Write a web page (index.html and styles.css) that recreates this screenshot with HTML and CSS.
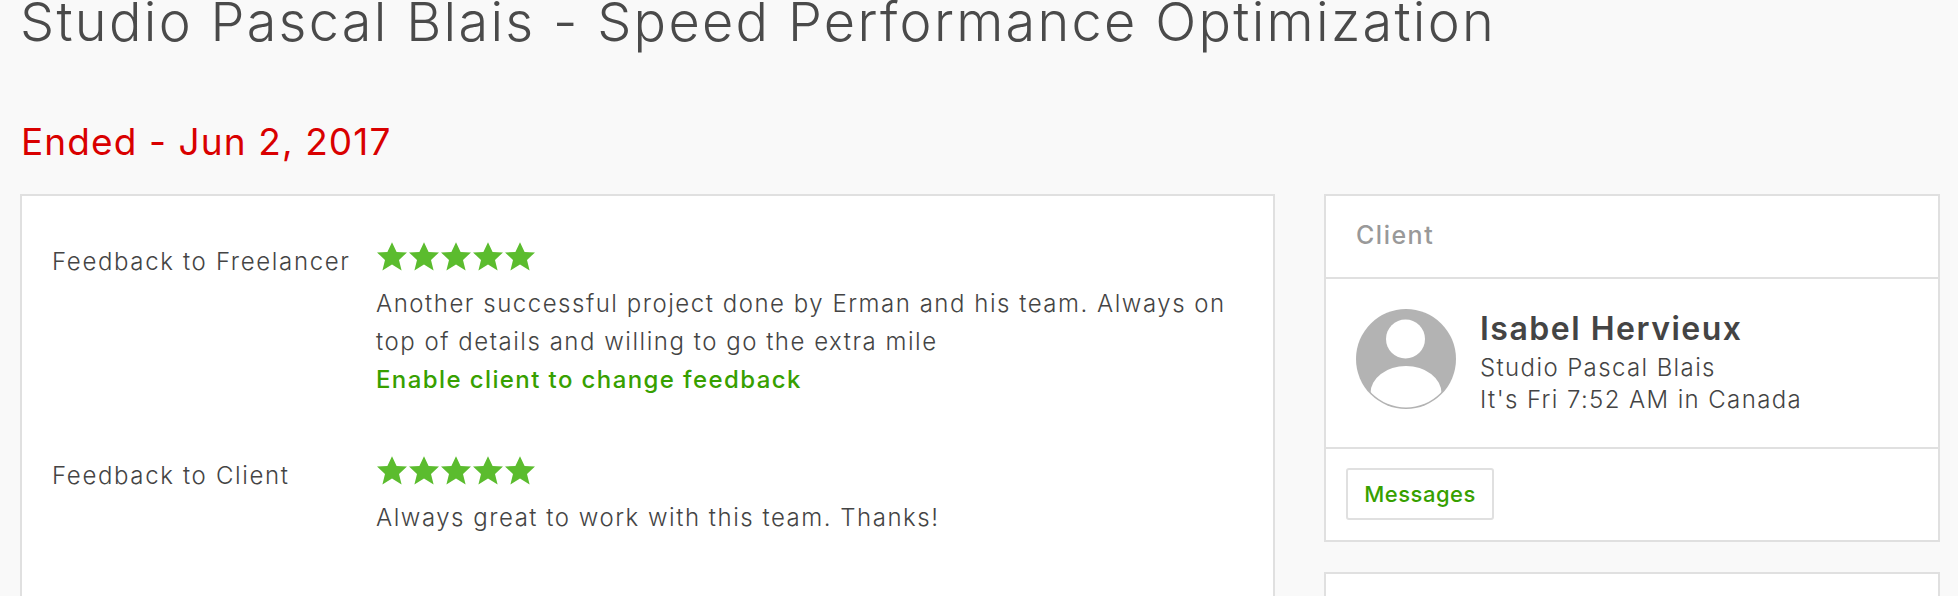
FILE: index.html
```html
<!DOCTYPE html>
<html lang="en">
<head>
<meta charset="utf-8">
<title>Studio Pascal Blais - Speed Performance Optimization</title>
<link rel="stylesheet" href="styles.css">
</head>
<body>
<svg class="defs" width="0" height="0" aria-hidden="true">
  <symbol id="star" viewBox="0 0 32 30"><polygon points="16,0.2 20.6,10 31,10.4 23,18 25.6,28.4 16,22.6 6.4,28.4 9,18 1,10.4 11.4,10"/></symbol>
</svg>
<div class="page">
  <h1 class="title">Studio Pascal Blais - Speed Performance Optimization</h1>
  <h2 class="status">Ended - Jun 2, 2017</h2>
  <div class="columns">
    <section class="card feedback">
      <div class="row">
        <div class="label">Feedback to Freelancer</div>
        <div class="body">
          <div class="stars"><svg><use href="#star"/></svg><svg><use href="#star"/></svg><svg><use href="#star"/></svg><svg><use href="#star"/></svg><svg><use href="#star"/></svg></div>
          <p class="text">Another successful project done by Erman and his team. Always on top of details and willing to go the extra mile</p>
          <a class="link">Enable client to change feedback</a>
        </div>
      </div>
      <div class="row">
        <div class="label">Feedback to Client</div>
        <div class="body">
          <div class="stars"><svg><use href="#star"/></svg><svg><use href="#star"/></svg><svg><use href="#star"/></svg><svg><use href="#star"/></svg><svg><use href="#star"/></svg></div>
          <p class="text">Always great to work with this team. Thanks!</p>
        </div>
      </div>
    </section>
    <aside class="side">
      <section class="card client">
        <div class="client-head">Client</div>
        <div class="client-info">
          <svg class="avatar" viewBox="0 0 100 100">
            <defs><clipPath id="inner"><circle cx="50" cy="50" r="48.5"/></clipPath></defs>
            <circle cx="50" cy="50" r="50" fill="#b3b3b3"/>
            <circle cx="49.5" cy="30" r="19.5" fill="#fff"/>
            <ellipse cx="50" cy="84" rx="35.5" ry="27" fill="#fff" clip-path="url(#inner)"/>
          </svg>
          <div class="who">
            <div class="name">Isabel Hervieux</div>
            <div class="line">Studio Pascal Blais</div>
            <div class="line">It's Fri 7:52 AM in Canada</div>
          </div>
        </div>
        <div class="client-foot"><button class="btn">Messages</button></div>
      </section>
      <section class="card next"></section>
    </aside>
  </div>
</div>
</body>
</html>
```
FILE: styles.css
```css
html, body { margin: 0; height: 100%; overflow: hidden; background: #f9f9f9; }
body { font-family: Inter, "Liberation Sans", sans-serif; color: #444; }
.defs { display: block; height: 0; }
.page { padding: 0 18px 0 20px; }
.title { margin: -13px 0 0; font-size: 54px; line-height: 70px; font-weight: 300; letter-spacing: 2.3px; white-space: nowrap; color: #4a4a4a; }
.status { margin: 63px 0 0 1px; font-size: 37px; line-height: 44px; font-weight: 400; letter-spacing: 1.1px; color: #d90000; }
.columns { display: grid; grid-template-columns: 1255px 616px; column-gap: 49px; margin-top: 30px; }
.card { background: #fff; border: 2px solid #e0e0e0; box-sizing: border-box; }
.feedback { padding: 46px 30px 0; height: 500px; }
.row { display: grid; grid-template-columns: 324px 1fr; height: 214px; }
.label { padding-top: 1px; font-size: 24px; line-height: 38px; letter-spacing: 1.65px; font-weight: 300; white-space: nowrap; }
.stars { display: flex; height: 30px; }
.stars svg { width: 32px; height: 30px; fill: #5bbc2e; }
.text { margin: 13px 0 0; font-size: 24px; line-height: 38px; letter-spacing: 1.52px; font-weight: 300; width: 860px; }
.link { display: block; font-size: 24px; line-height: 38px; letter-spacing: 1.4px; font-weight: 500; color: #37a000; }
.side { display: flex; flex-direction: column; gap: 30px; }
.client-head { height: 81px; padding-left: 30px; font-size: 25px; line-height: 78px; letter-spacing: 1.5px; font-weight: 500; color: #999; border-bottom: 2px solid #e0e0e0; }
.client-info { display: flex; gap: 24px; height: 170px; padding: 30px 0 0 30px; box-sizing: border-box; border-bottom: 2px solid #e0e0e0; }
.avatar { width: 100px; height: 100px; flex: none; }
.name { font-size: 32px; line-height: 38px; letter-spacing: 1.5px; font-weight: 600; margin: 1px 0 4px; }
.line { font-size: 24px; line-height: 32px; letter-spacing: 1.38px; font-weight: 300; }
.client-foot { padding: 19px 0 20px 20px; }
.btn { display: block; width: 148px; height: 52px; padding: 0; background: #fff; border: 2px solid #e0e0e0; border-radius: 3px; font-family: inherit; font-size: 22px; letter-spacing: 0.5px; font-weight: 500; color: #37a000; }
.next { height: 100px; }
```
